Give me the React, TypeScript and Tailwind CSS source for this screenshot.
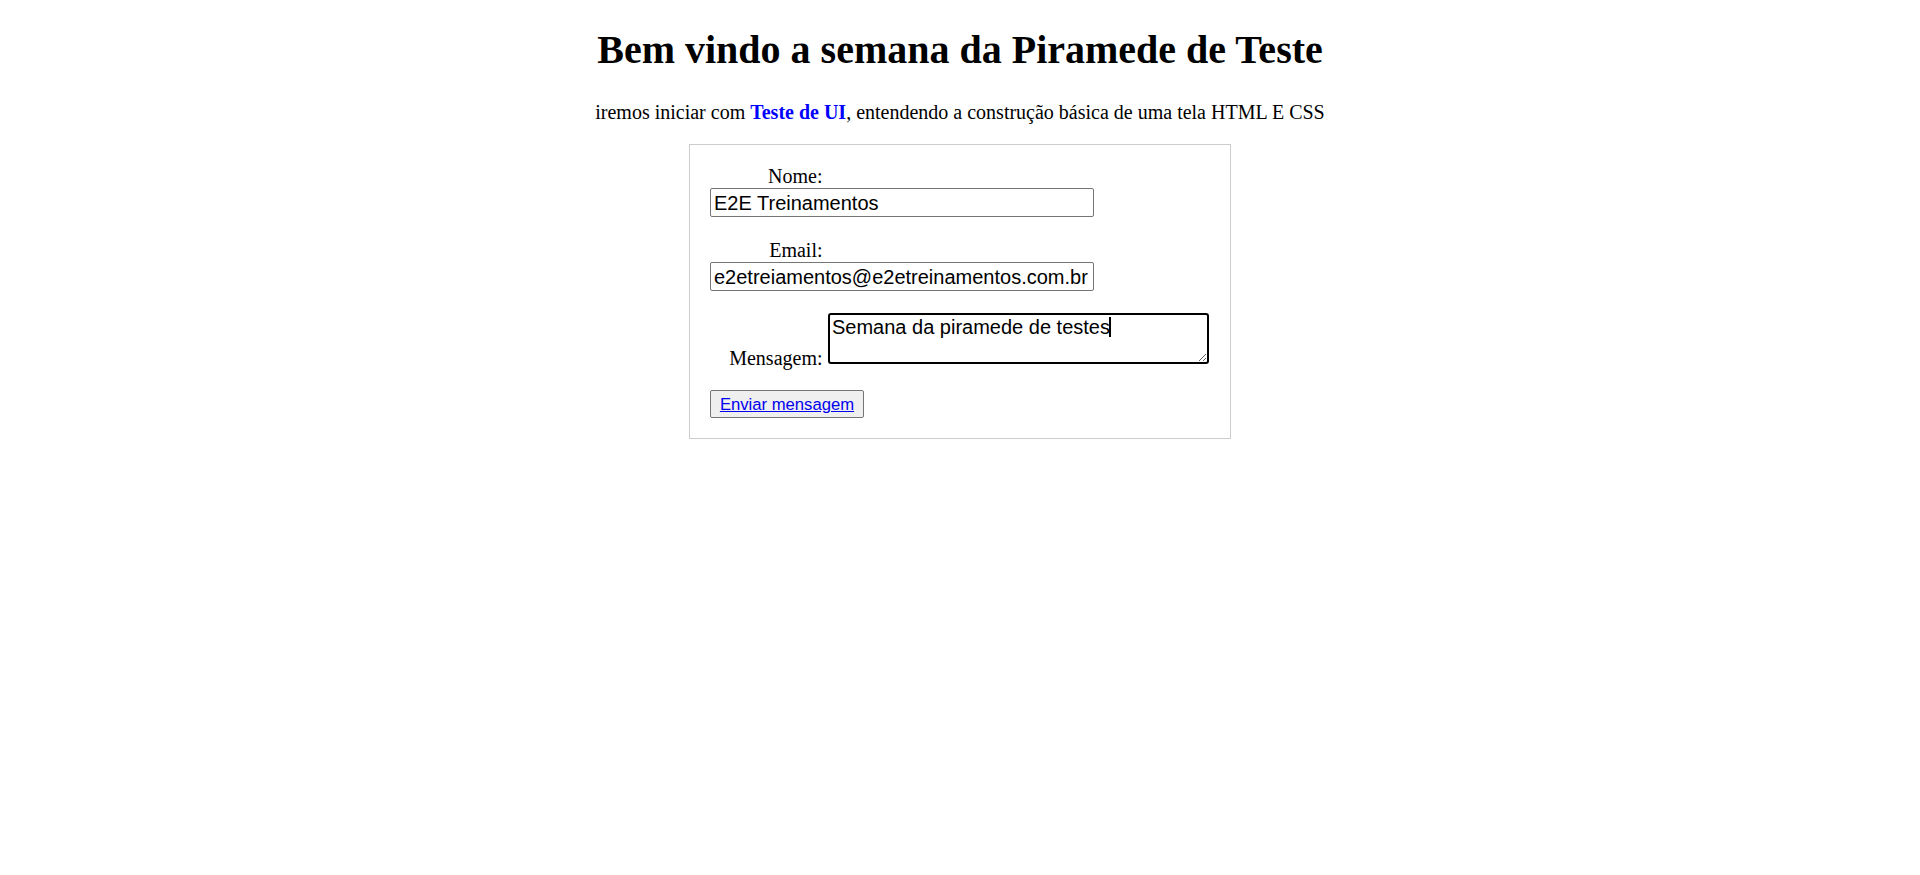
import { useState } from "react";

const inputClass =
  "block w-[384px] h-[29px] border border-[#767676] rounded-[2px] px-[3px] text-[20px] text-black bg-white outline-none font-['Liberation_Sans',Arial,sans-serif]";

export default function App() {
  const [nome, setNome] = useState("E2E Treinamentos");
  const [email, setEmail] = useState("e2etreiamentos@e2etreinamentos.com.br");
  const [mensagem, setMensagem] = useState("Semana da piramede de testes");

  return (
    <div className="min-h-screen bg-white text-black font-['Liberation_Serif','Times_New_Roman',serif] flex flex-col items-center px-[10px]">
      <h1 className="mt-[27px] text-[40px] leading-[46px] font-bold">
        Bem vindo a semana da Piramede de Teste
      </h1>

      <p className="mt-[28px] text-[20px] leading-[23px]">
        iremos iniciar com{" "}
        <strong className="font-bold text-[#0000ff]">Teste de UI</strong>,
        entendendo a construção básica de uma tela HTML E CSS
      </p>

      <form
        className="mt-[20px] w-[542px] border border-[#cccccc] p-[20px] text-[20px]"
        onSubmit={(e) => e.preventDefault()}
      >
        {/* Nome */}
        <div>
          <label
            htmlFor="nome"
            className="block w-[112.5px] text-right leading-[23px]"
          >
            Nome:
          </label>
          <input
            id="nome"
            type="text"
            value={nome}
            onChange={(e) => setNome(e.target.value)}
            className={inputClass}
          />
        </div>

        {/* Email */}
        <div className="mt-[22px]">
          <label
            htmlFor="email"
            className="block w-[112.5px] text-right leading-[23px]"
          >
            Email:
          </label>
          <input
            id="email"
            type="email"
            value={email}
            onChange={(e) => setEmail(e.target.value)}
            className={inputClass}
          />
        </div>

        {/* Mensagem */}
        <div className="mt-[22px] flex items-start">
          <label
            htmlFor="msg"
            className="mt-[34px] w-[112.5px] shrink-0 text-right leading-[23px]"
          >
            Mensagem:
          </label>
          <div className="relative ml-[5.5px]">
            <textarea
              id="msg"
              value={mensagem}
              onChange={(e) => setMensagem(e.target.value)}
              className="block w-[381px] h-[51px] border-2 border-black rounded-[3px] p-[2px] text-[20px] leading-[20px] text-black bg-white outline-none resize font-['Liberation_Sans',Arial,sans-serif]"
            />
            <span className="pointer-events-none absolute left-[281px] top-[4px] h-[20px] w-[1.5px] bg-black" />
          </div>
        </div>

        {/* Enviar */}
        <div className="mt-[20px]">
          <button
            type="submit"
            className="block h-[28px] w-[154px] border border-[#767676] rounded-[2px] bg-[#efefef] text-[16.67px] text-[#0000ee] underline font-['Liberation_Sans',Arial,sans-serif]"
          >
            Enviar mensagem
          </button>
        </div>
      </form>
    </div>
  );
}
